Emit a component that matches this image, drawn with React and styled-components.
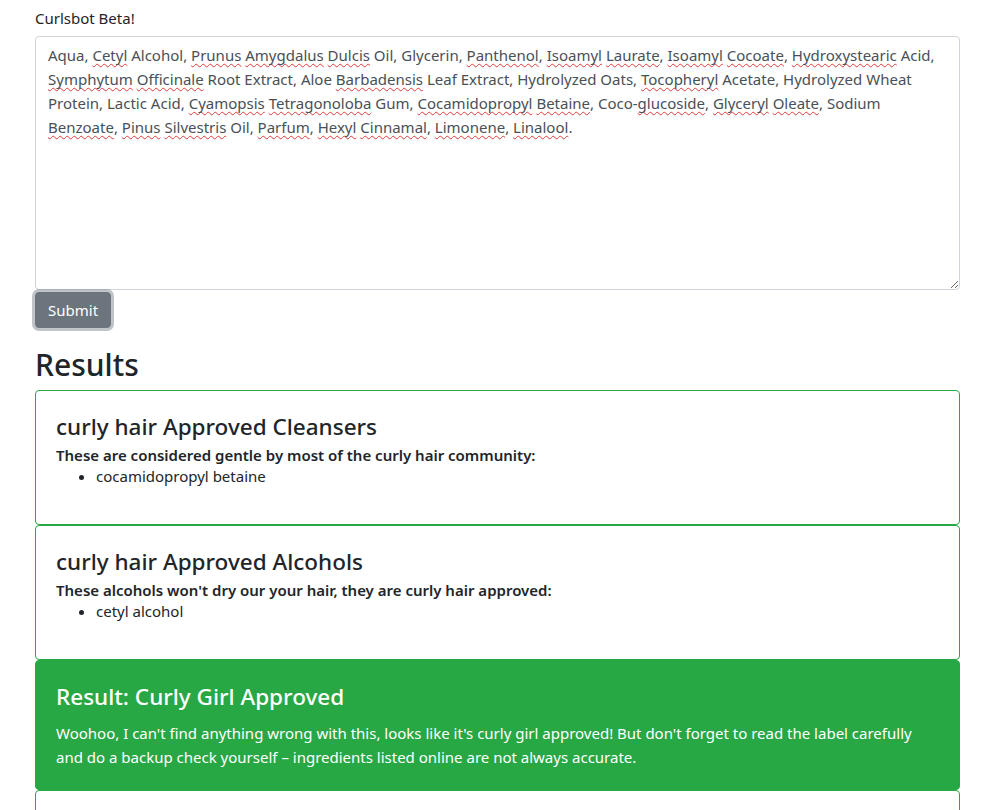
import React from "react";
import styled, { createGlobalStyle } from "styled-components";

const GlobalStyle = createGlobalStyle`
  html, body { margin: 0; padding: 0; background: #fff; }
  body {
    font-family: "Segoe UI", "Noto Sans", "Open Sans", Arial, sans-serif;
    font-size: 15px;
    line-height: 24px;
    color: #212529;
  }
  * { box-sizing: border-box; }
`;

const Page = styled.main`
  width: 925px;
  margin-left: 35px;
  padding-top: 6px;
`;

const Label = styled.div`
  font-size: 15px;
  line-height: 24px;
  margin-bottom: 6px;
`;

const FakeTextarea = styled.div`
  height: 254px;
  padding: 6px 12px;
  border: 1px solid #ced4da;
  border-radius: 4px;
  color: #495057;
  font-size: 15px;
  line-height: 24px;
  overflow: auto;
  resize: vertical;
  outline: none;
`;

const Misspelled = styled.span`
  text-decoration: underline wavy #e23b3b;
  text-decoration-thickness: 1px;
  text-underline-offset: 2px;
  text-decoration-skip-ink: none;
`;

const SubmitButton = styled.button`
  display: block;
  margin-top: 2px;
  padding: 5px 12px;
  font-family: inherit;
  font-size: 15px;
  line-height: 24px;
  color: #fff;
  background: #6c757d;
  border: 1px solid #6c757d;
  border-radius: 4px;
  box-shadow: 0 0 0 3px rgba(130, 138, 145, 0.5);
  cursor: pointer;
`;

const Heading = styled.h2`
  margin: 18px 0 6px;
  font-size: 30px;
  font-weight: 500;
  line-height: 38px;
`;

const Card = styled.section`
  border: 1px solid #28a745;
  border-radius: 4px;
  background: ${(p) => (p.$filled ? "#28a745" : "#fff")};
  color: ${(p) => (p.$filled ? "#fff" : "#212529")};
  padding: 20px;
`;

const CardTitle = styled.h4`
  margin: 0 0 8px;
  font-size: 22.5px;
  font-weight: 500;
  line-height: 32px;
`;

const CardSubtitle = styled.h6`
  margin: -5px 0 0;
  font-size: 15px;
  font-weight: 600;
  line-height: 18px;
`;

const List = styled.ul`
  margin: 0 0 16px;
  padding-left: 40px;
  line-height: 24px;
`;

const CardText = styled.p`
  margin: 0;
  line-height: 24px;
`;

const ingredients =
  "Aqua, [Cetyl] Alcohol, [Prunus] [Amygdalus] [Dulcis] Oil, Glycerin, [Panthenol], [Isoamyl] [Laurate], [Isoamyl] [Cocoate], [Hydroxystearic] Acid, [Symphytum] [Officinale] Root Extract, Aloe [Barbadensis] Leaf Extract, Hydrolyzed Oats, [Tocopheryl] Acetate, Hydrolyzed Wheat Protein, Lactic Acid, [Cyamopsis] [Tetragonoloba] Gum, [Cocamidopropyl] [Betaine], Coco-[glucoside], [Glyceryl] [Oleate], Sodium [Benzoate], [Pinus] [Silvestris] Oil, [Parfum], [Hexyl] [Cinnamal], [Limonene], [Linalool].";

function renderIngredients(text) {
  return text.split(/(\[[^\]]+\])/).map((part, i) =>
    part.startsWith("[") ? (
      <Misspelled key={i}>{part.slice(1, -1)}</Misspelled>
    ) : (
      <React.Fragment key={i}>{part}</React.Fragment>
    )
  );
}

const results = [
  {
    title: "curly hair Approved Cleansers",
    subtitle: "These are considered gentle by most of the curly hair community:",
    items: ["cocamidopropyl betaine"],
  },
  {
    title: "curly hair Approved Alcohols",
    subtitle: "These alcohols won't dry our your hair, they are curly hair approved:",
    items: ["cetyl alcohol"],
  },
];

export default function App() {
  return (
    <>
      <GlobalStyle />
      <Page>
        <Label>Curlsbot Beta!</Label>
        <form onSubmit={(e) => e.preventDefault()}>
          <FakeTextarea
            role="textbox"
            aria-multiline="true"
            contentEditable
            suppressContentEditableWarning
            spellCheck={false}
          >
            {renderIngredients(ingredients)}
          </FakeTextarea>
          <SubmitButton type="submit">Submit</SubmitButton>
        </form>
        <Heading>Results</Heading>
        {results.map((r) => (
          <Card key={r.title}>
            <CardTitle>{r.title}</CardTitle>
            <CardSubtitle>{r.subtitle}</CardSubtitle>
            <List>
              {r.items.map((it) => (
                <li key={it}>{it}</li>
              ))}
            </List>
          </Card>
        ))}
        <Card $filled>
          <CardTitle>Result: Curly Girl Approved</CardTitle>
          <CardText>
            Woohoo, I can't find anything wrong with this, looks like it's curly girl approved! But
            don't forget to read the label carefully and do a backup check yourself – ingredients
            listed online are not always accurate.
          </CardText>
        </Card>
        <Card>
          <CardTitle>curly hair Approved Oils</CardTitle>
          <CardSubtitle>These oils are considered safe for curly hair:</CardSubtitle>
          <List>
            <li>prunus amygdalus dulcis oil</li>
          </List>
        </Card>
      </Page>
    </>
  );
}
